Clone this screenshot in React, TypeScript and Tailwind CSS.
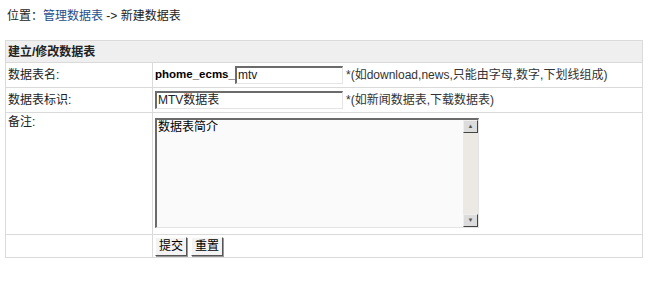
import React from 'react'

const font = { fontFamily: '"Liberation Sans", "Noto Sans CJK SC", sans-serif' }

function Inset({ className, children }: { className: string; children?: React.ReactNode }) {
  return (
    <div
      className={`border-t-2 border-l-2 border-b border-r border-t-[#6b6b6b] border-l-[#6b6b6b] border-b-[#e4e4e4] border-r-[#e4e4e4] bg-white ${className}`}
    >
      {children}
    </div>
  )
}

function OldButton({ label }: { label: string }) {
  return (
    <button
      type="button"
      className="h-[19px] border border-t-white border-l-white border-b-[#555] border-r-[#555] bg-[#f3f3f3] px-[3px] text-[12px] leading-[15px] text-black shadow-[1px_1px_0_#999]"
    >
      {label}
    </button>
  )
}

export default function App() {
  return (
    <div className="h-[281px] w-[650px] bg-white text-[12px] text-[#222]" style={font}>
      <div className="px-[7px] pt-[7px] leading-[18px]">
        位置：<span className="text-[#1d4f8c]">管理数据表</span> -&gt; 新建数据表
      </div>

      <table className="ml-[5px] mt-[15px] w-[638px] border-separate border-spacing-[1px] bg-[#dadada]">
        <tbody>
          <tr>
            <td colSpan={2} className="h-[21px] bg-[#efefef] px-[2px] font-bold text-[#222]">
              建立/修改数据表
            </td>
          </tr>
          <tr>
            <td className="h-[24px] w-[146px] bg-white px-[2px]">数据表名:</td>
            <td className="bg-white px-[2px]">
              <div className="flex items-center">
                <span className="w-[80px] shrink-0 text-[11.5px] font-bold text-black">phome_ecms_</span>
                <Inset className="h-[18px] w-[108px] shrink-0 px-[1px] leading-[15px]">mtv</Inset>
                <span className="ml-[3px] text-[#333]">*(如download,news,只能由字母,数字,下划线组成)</span>
              </div>
            </td>
          </tr>
          <tr>
            <td className="h-[24px] bg-white px-[2px]">数据表标识:</td>
            <td className="bg-white px-[2px]">
              <div className="flex items-center">
                <Inset className="h-[18px] w-[188px] shrink-0 px-[1px] leading-[15px]">MTV数据表</Inset>
                <span className="ml-[3px] text-[#333]">*(如新闻数据表,下载数据表)</span>
              </div>
            </td>
          </tr>
          <tr>
            <td className="h-[121px] bg-white px-[2px] align-top">备注:</td>
            <td className="bg-white px-[2px] py-[5px] align-top">
              <Inset className="flex h-[110px] w-[324px]">
                <div className="flex-1 bg-[#fafafa] px-[1px] leading-[15px] text-black">数据表简介</div>
                <div className="flex w-[15px] flex-col bg-[#ece9e4]">
                  <div className="flex h-[13px] items-center justify-center border border-t-[#eee] border-l-[#eee] border-b-[#444] border-r-[#444] bg-[#dcdcdc] text-[6px] text-[#555]">
                    ▲
                  </div>
                  <div className="flex-1" />
                  <div className="flex h-[13px] items-center justify-center border border-t-[#eee] border-l-[#eee] border-b-[#444] border-r-[#444] bg-[#dcdcdc] text-[6px] text-[#555]">
                    ▼
                  </div>
                </div>
              </Inset>
            </td>
          </tr>
          <tr>
            <td className="h-[22px] bg-white px-[2px]"></td>
            <td className="bg-white px-[2px]">
              <div className="flex gap-[4px]">
                <OldButton label="提交" />
                <OldButton label="重置" />
              </div>
            </td>
          </tr>
        </tbody>
      </table>
    </div>
  )
}
